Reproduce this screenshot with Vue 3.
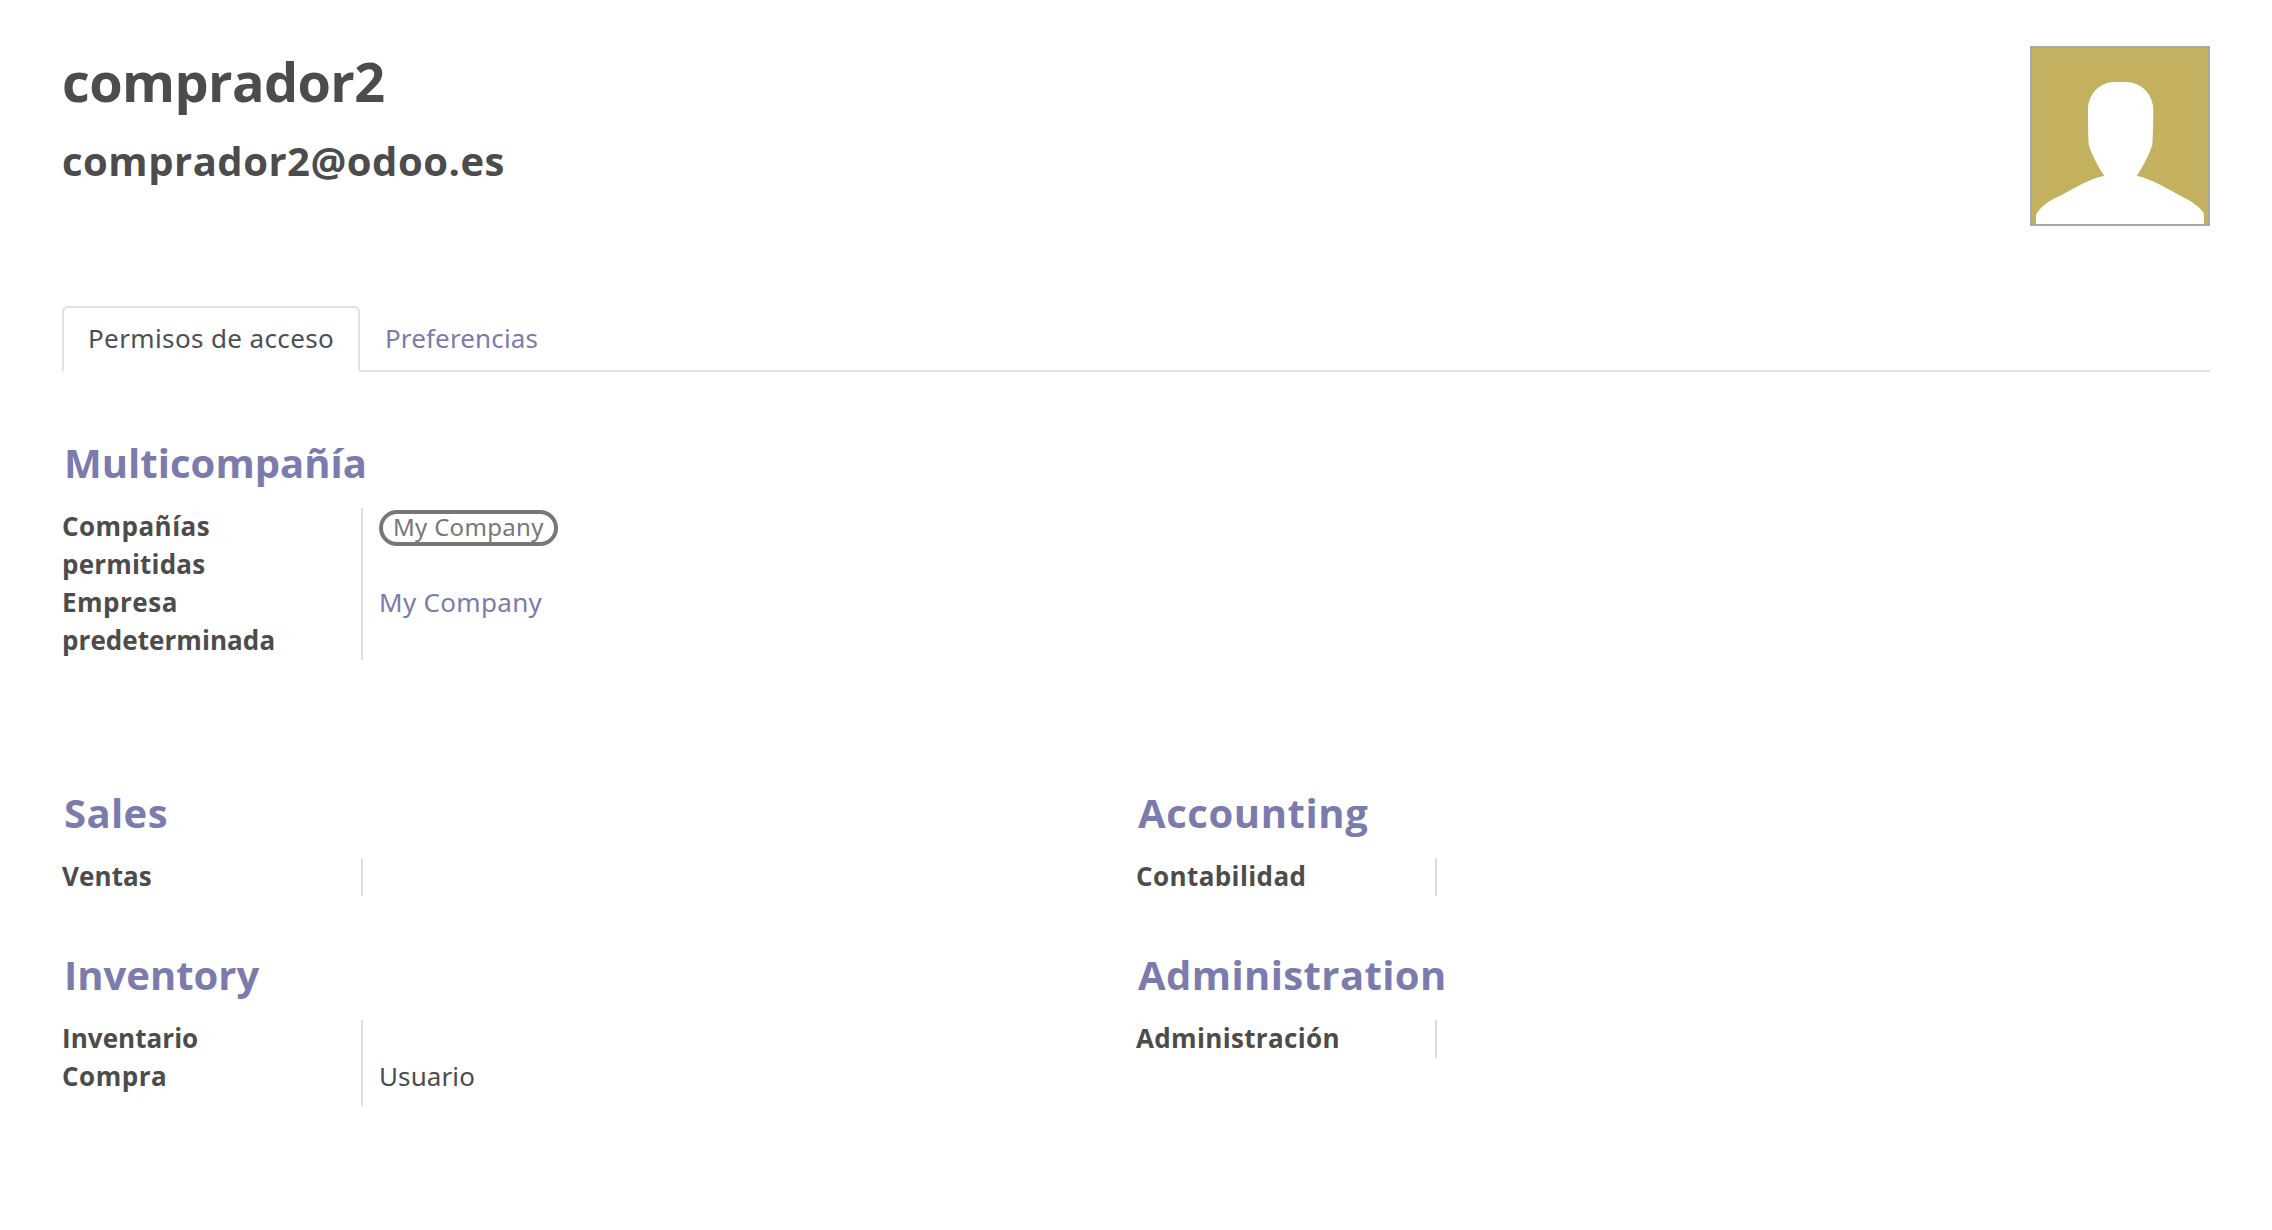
<script setup>
const multi = {
  title: 'Multicompañía',
  spacing: 0.04,
  rows: [
    { label: ['Compañías', 'permitidas'], spacing: [0.45, 0.2], tag: 'My Company' },
    { label: ['Empresa', 'predeterminada'], spacing: [0.5, 0.06], link: 'My Company' },
  ],
}

const columns = [
  [
    { title: 'Sales', spacing: 0.4, rows: [{ label: ['Ventas'], spacing: [0.1] }] },
    {
      title: 'Inventory',
      spacing: 0,
      last: true,
      rows: [
        { label: ['Inventario'], spacing: [0.05] },
        { label: ['Compra'], spacing: [0.5], text: 'Usuario' },
      ],
    },
  ],
  [
    { title: 'Accounting', spacing: 0.58, rows: [{ label: ['Contabilidad'], spacing: [0.4] }] },
    { title: 'Administration', spacing: 0.4, rows: [{ label: ['Administración'], spacing: [0.34] }] },
  ],
]
</script>

<template>
  <main class="sheet">
    <header class="head">
      <div>
        <h1>comprador2</h1>
        <h2 class="email">comprador2@odoo.es</h2>
      </div>
      <svg class="avatar" viewBox="0 0 180 180" width="180" height="180">
        <rect x="1" y="1" width="178" height="178" fill="#c3b15f" stroke="#a8a8a8" stroke-width="2" />
        <path
          fill="#fff"
          d="M6 178V169C10 161 18 155 31.700 149C45 142 58 133 74.300 129.700C68 121 62 109 58.700 99C58 87 58 76 58 64C58 48 70 36 84 36H96C111 36 123.300 48 123.300 64C123.300 76 123 87 122.300 99C119 109 113 121 106.700 129.700C122 133 136 142 149 149C161 155 171 161 174 168V178Z"
        />
      </svg>
    </header>

    <nav class="tabs">
      <a class="tab active">Permisos de acceso</a>
      <a class="tab">Preferencias</a>
    </nav>

    <section class="group multi">
      <h2 class="title" :style="{ letterSpacing: multi.spacing + 'px' }">{{ multi.title }}</h2>
      <div class="rows">
        <div v-for="row in multi.rows" :key="row.label[0]" class="row">
          <div class="label">
            <div v-for="(line, i) in row.label" :key="line" :style="{ letterSpacing: row.spacing[i] + 'px' }">{{ line }}</div>
          </div>
          <div class="value">
            <span v-if="row.tag" class="tag">{{ row.tag }}</span>
            <a v-if="row.link" class="link">{{ row.link }}</a>
          </div>
        </div>
      </div>
    </section>

    <div class="columns">
      <div v-for="(groups, c) in columns" :key="c" class="column">
        <section v-for="g in groups" :key="g.title" class="group">
          <h2 class="title" :style="{ letterSpacing: g.spacing + 'px' }">{{ g.title }}</h2>
          <div class="rows" :class="{ last: g.last }">
            <div v-for="row in g.rows" :key="row.label[0]" class="row">
              <div class="label">
                <div :style="{ letterSpacing: row.spacing[0] + 'px' }">{{ row.label[0] }}</div>
              </div>
              <div class="value"><span v-if="row.text" class="text">{{ row.text }}</span></div>
            </div>
          </div>
        </section>
      </div>
    </div>
  </main>
</template>

<style>
body {
  background: #fff;
}
</style>

<style scoped>
.sheet {
  box-sizing: border-box;
  height: 1230px;
  padding: 46px 62px 0;
  font-family: "Open Sans", "Noto Sans", sans-serif;
  font-size: 26px;
  line-height: 38px;
  color: #4c4c4c;
}
h1,
h2 {
  margin: 0;
  font-weight: 700;
}
.head {
  display: flex;
  justify-content: space-between;
  height: 180px;
}
h1 {
  margin-top: 5px;
  font-size: 54px;
  line-height: 60px;
  letter-spacing: -0.6px;
}
.email {
  margin-top: 25px;
  font-size: 40px;
  line-height: 50px;
  letter-spacing: 0.51px;
}
.avatar {
  display: block;
}
.tabs {
  display: flex;
  box-sizing: border-box;
  height: 66px;
  margin-top: 80px;
  border-bottom: 2px solid #dee2e6;
}
.tab {
  box-sizing: border-box;
  height: 66px;
  padding: 13px 25px 0;
  font-family: "Noto Sans", sans-serif;
  color: #7c7bad;
  letter-spacing: 0.14px;
}
.tab.active {
  width: 298px;
  padding: 11px 0 0 24px;
  border: 2px solid #dee2e6;
  border-bottom-color: #fff;
  border-radius: 6px 6px 0 0;
  background: #fff;
  color: #495057;
  letter-spacing: 0.38px;
  white-space: nowrap;
}
.title {
  padding-left: 2px;
  margin-bottom: 20px;
  font-size: 40px;
  line-height: 50px;
  color: #7c7bad;
}
.multi {
  margin-top: 66px;
}
.row {
  display: flex;
}
.rows.last .row:last-child {
  height: 48px;
}
.label {
  width: 299px;
  border-right: 2px solid #ddd;
  font-weight: 700;
}
.label > div {
  height: 38px;
  line-height: 36px;
}
.value {
  padding-left: 16px;
  font-family: "Noto Sans", sans-serif;
  line-height: 36px;
}
.link {
  color: #7c7bad;
  letter-spacing: 0.31px;
}
.text {
  letter-spacing: 0.1px;
}
.tag {
  display: block;
  box-sizing: border-box;
  width: 179px;
  height: 36px;
  margin-top: 2px;
  padding-left: 10px;
  border: 4px solid #777;
  border-radius: 18px;
  font-size: 24px;
  line-height: 25px;
  color: #777;
  letter-spacing: 0.3px;
  white-space: nowrap;
}
.columns {
  display: flex;
  margin-top: 128px;
}
.column {
  display: flex;
  flex-direction: column;
  gap: 54px;
  width: 1074px;
}
</style>
